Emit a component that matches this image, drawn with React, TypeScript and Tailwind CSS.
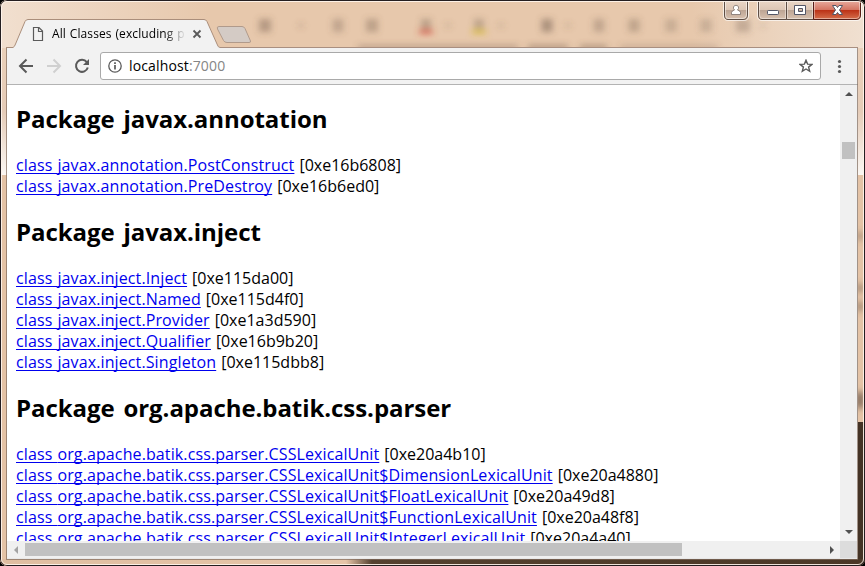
import React from "react";

type Entry = { name: string; addr: string };

const groups: { title: string; items: Entry[] }[] = [
  {
    title: "javax.annotation",
    items: [
      { name: "javax.annotation.PostConstruct", addr: "0xe16b6808" },
      { name: "javax.annotation.PreDestroy", addr: "0xe16b6ed0" },
    ],
  },
  {
    title: "javax.inject",
    items: [
      { name: "javax.inject.Inject", addr: "0xe115da00" },
      { name: "javax.inject.Named", addr: "0xe115d4f0" },
      { name: "javax.inject.Provider", addr: "0xe1a3d590" },
      { name: "javax.inject.Qualifier", addr: "0xe16b9b20" },
      { name: "javax.inject.Singleton", addr: "0xe115dbb8" },
    ],
  },
  {
    title: "org.apache.batik.css.parser",
    items: [
      { name: "org.apache.batik.css.parser.CSSLexicalUnit", addr: "0xe20a4b10" },
      { name: "org.apache.batik.css.parser.CSSLexicalUnit$DimensionLexicalUnit", addr: "0xe20a4880" },
      { name: "org.apache.batik.css.parser.CSSLexicalUnit$FloatLexicalUnit", addr: "0xe20a49d8" },
      { name: "org.apache.batik.css.parser.CSSLexicalUnit$FunctionLexicalUnit", addr: "0xe20a48f8" },
      { name: "org.apache.batik.css.parser.CSSLexicalUnit$IntegerLexicalUnit", addr: "0xe20a4a40" },
    ],
  },
];

// Blurred desktop content seen through the glass window frame: x, width, opacity.
const marks = [
  [265, 12, 0.4], [301, 5, 0.22], [338, 11, 0.3], [372, 12, 0.34], [426, 10, 0.36], [448, 6, 0.18],
  [479, 10, 0.32], [501, 6, 0.18], [547, 11, 0.48], [568, 6, 0.18], [599, 11, 0.3], [634, 11, 0.32],
  [671, 12, 0.24], [706, 12, 0.24], [743, 14, 0.3], [763, 5, 0.14],
];

function Glass() {
  return (
    <svg className="absolute inset-0" width="865" height="566">
      <defs>
        <linearGradient id="top" x1="0" x2="1">
          <stop offset="0" stopColor="#f1dfcf" />
          <stop offset=".24" stopColor="#e7c8ac" />
          <stop offset=".8" stopColor="#e7c8ac" />
          <stop offset="1" stopColor="#f0e0d1" />
        </linearGradient>
        <linearGradient id="side" x1="0" y1="0" x2="0" y2="1">
          <stop offset="0" stopColor="#ead0b9" />
          <stop offset=".5" stopColor="#e5ccb8" />
          <stop offset="1" stopColor="#fbf7f3" />
        </linearGradient>
        <linearGradient id="bottom" x1="0" x2="1">
          <stop offset="0" stopColor="#dfbea1" />
          <stop offset=".4" stopColor="#e6c5a8" />
          <stop offset=".43" stopColor="#54412f" />
          <stop offset="1" stopColor="#4b3827" />
        </linearGradient>
        <filter id="soft" x="-10%" y="-10%" width="120%" height="120%"><feGaussianBlur stdDeviation="3.2" /></filter>
      </defs>
      <rect width="865" height="566" fill="#e4c3a6" />
      <rect width="865" height="48" fill="url(#top)" />
      <rect y="48" width="8" height="127" fill="url(#side)" />
      <rect x="857" y="48" width="8" height="127" fill="url(#side)" />
      <rect x="857" y="422" width="8" height="144" fill="#443325" />
      <rect y="559" width="865" height="7" fill="url(#bottom)" />
      <g filter="url(#soft)" fill="#6b5647">
        {marks.map(([x, w, o]) => (
          <rect key={x} x={x - w / 2} y={w < 7 ? 23 : 19} width={w} height={w < 7 ? 5 : 13} opacity={o} />
        ))}
        <rect x="419" y="30" width="14" height="4" fill="#d94c3c" opacity=".75" />
        <rect x="472" y="30" width="14" height="4" fill="#dcc02c" opacity=".75" />
        <rect x="358" y="45" width="160" height="5" opacity=".35" />
        <rect x="528" y="45" width="40" height="5" opacity=".45" />
        <rect x="580" y="45" width="27" height="5" opacity=".45" />
        <rect x="620" y="45" width="98" height="5" opacity=".25" />
        <rect x="856" y="232" width="8" height="8" opacity=".4" />
        <rect x="856" y="284" width="8" height="8" opacity=".5" />
        <rect x="856" y="302" width="8" height="9" opacity=".5" />
        <rect x="856" y="392" width="8" height="16" opacity=".8" />
      </g>
    </svg>
  );
}

function WindowButtons() {
  return (
    <svg className="absolute right-0 top-0" width="160" height="24">
      <defs>
        <linearGradient id="btn" x1="0" y1="0" x2="0" y2="1">
          <stop offset="0" stopColor="#ead6c6" /><stop offset=".48" stopColor="#dcc6b5" />
          <stop offset=".5" stopColor="#bda594" /><stop offset="1" stopColor="#d9c2b0" />
        </linearGradient>
        <linearGradient id="close" x1="0" y1="0" x2="0" y2="1">
          <stop offset="0" stopColor="#e7aa9d" /><stop offset=".47" stopColor="#d47562" />
          <stop offset=".5" stopColor="#bb3116" /><stop offset="1" stopColor="#d6714e" />
        </linearGradient>
      </defs>
      <g transform="translate(-15 0)">
        <path d="M33.500 1 V16 Q33.500 20.500 38 20.500 H54 Q58.500 20.500 58.500 16 V1" fill="none" stroke="#fff" strokeOpacity=".65" />
        <path d="M34.500 1 V15 Q34.500 19.500 38 19.500 H53 Q57.500 19.500 57.500 15 V1Z" fill="url(#btn)" stroke="#5e4e45" />
        <path d="M35.500 2 V15 Q35.500 18.500 38 18.500 H53 Q56.500 18.500 56.500 15 V2" fill="none" stroke="#fff" strokeOpacity=".5" />
        <path d="M67.500 1 V16 Q67.500 20.500 72 20.500 H167 Q171.500 20.500 171.500 16 V1" fill="none" stroke="#fff" strokeOpacity=".65" />
        <path d="M68.500 1 V15 Q68.500 19.500 72 19.500 H96.500 V1Z" fill="url(#btn)" stroke="#5e4e45" />
        <path d="M96.500 1 V19.500 H123.500 V1Z" fill="url(#btn)" stroke="#5e4e45" />
        <path d="M123.500 1 V19.500 H166 Q170.500 19.500 170.500 15 V1Z" fill="url(#close)" stroke="#581d16" />
        <path d="M69.500 2 V15 Q69.500 18.500 72 18.500 H95.500 V2 M97.500 2 V18.500 H122.500 V2 M124.500 2 V18.500 H166 Q169.500 18.500 169.500 15 V2" fill="none" stroke="#fff" strokeOpacity=".42" />
        <path d="M41.500 14.500 V12.500 Q42 10.500 44.500 10 Q43 8.500 43.500 7 Q44 5.300 46 5.300 Q48 5.300 48.500 7 Q49 8.500 47.500 10 Q50 10.500 50.500 12.500 V14.500Z" fill="#fff" stroke="#7b706b" strokeWidth=".8" />
        <rect x="77.500" y="10.500" width="11" height="4" rx=".8" fill="#fff" stroke="#535666" />
        <path fillRule="evenodd" d="M104.500 5.500 H115.500 V14.500 H104.500Z M108.500 8.500 V11.500 H112.500 V8.500Z" fill="#fff" stroke="#535666" />
        <path d="M142.500 5.500 h3.500 l1.500 2 1.500 -2 h3.500 l-3 4.500 3 4.500 h-3.500 l-1.500 -2 -1.500 2 h-3.500 l3 -4.500Z" fill="#fff" stroke="#535666" />
      </g>
    </svg>
  );
}

function TabStrip() {
  return (
    <div className="relative h-[47px] shrink-0">
      <svg className="absolute left-0 top-0" width="260" height="48">
        <path d="M217.500 29 Q216.500 26.500 219 26.500 H242 Q244 26.500 245 28.500 L250.500 41 Q251 42.500 249 42.500 H227 Q224.500 42.500 223.500 40.500Z" fill="#d4cbc5" stroke="#b09a8b" />
        <path d="M6 48 V47.500 H13 Q14.500 47 15.500 44 L25 21.500 Q26 19.500 28 19.500 H204 Q206 19.500 207 21.500 L217 44 Q218 47 220 47.500 V48Z" fill="#f2f2f2" />
        <path d="M6 47.500 H13 Q14.500 47 15.500 44 L25 21.500 Q26 19.500 28 19.500 H204 Q206 19.500 207 21.500 L217 44 Q218 47.500 220 47.500" fill="none" stroke="#aa8e7b" />
        <path d="M33.500 27.500 H39 L42.500 31 V40.500 H33.500Z M38.500 27.500 V31.500 H42.500" fill="none" stroke="#5a5a5a" strokeWidth="1.200" />
        <path d="M193.500 30.500 l7 7 M200.500 30.500 l-7 7" stroke="#5a5a5a" strokeWidth="1.800" />
      </svg>
      <div className="absolute left-[220px] right-[7px] top-[47px] h-px bg-[#a98f80]" />
      <div className="absolute left-[52px] top-[25px] w-[134px] overflow-hidden whitespace-nowrap text-[12px] leading-[18px] tracking-[0.1px] text-black [mask-image:linear-gradient(to_right,#000_112px,transparent_134px)] [word-spacing:0.6px]">
        All Classes (excluding p
      </div>
      <WindowButtons />
    </div>
  );
}

function Toolbar() {
  return (
    <div className="mx-[7px] flex h-[38px] shrink-0 items-start border-b border-[#b3b3b3] bg-[#f2f2f2] pt-[5px]">
      <svg className="shrink-0" width="93" height="28" viewBox="7 52 93 28" fill="none">
        <path d="M33 66 H20 M26.500 59.500 L20 66 L26.500 72.500" stroke="#5a5a5a" strokeWidth="2" />
        <path d="M47 66 H60 M53.500 59.500 L60 66 L53.500 72.500" stroke="#d0d0d0" strokeWidth="2" />
        <path d="M86.800 62.200 A6 6 0 1 0 87.800 67.500" stroke="#5a5a5a" strokeWidth="2" />
        <path d="M89 59 V65 H83Z" fill="#5a5a5a" />
      </svg>
      <div className="flex h-[28px] w-[721px] items-center rounded-[3px] border border-[#a9a9a9] bg-white px-[7px]">
        <svg width="14" height="14" viewBox="0 0 14 14" fill="none" stroke="#5a5a5a">
          <circle cx="7" cy="7" r="6.200" strokeWidth="1.300" />
          <path d="M7 6 V10.500 M7 3.300 V5" strokeWidth="1.700" />
        </svg>
        <span className="ml-[7px] text-[14px] leading-[24px] tracking-[0.14px] text-black">
          localhost<span className="text-[#858585]">:7000</span>
        </span>
        <svg className="ml-auto" width="14" height="14" viewBox="0 0 14 14" fill="none" stroke="#5a5a5a" strokeWidth="1.400">
          <path d="M7 1.200 L8.600 5.100 L12.900 5.400 L9.600 8.100 L10.700 12.300 L7 10 L3.300 12.300 L4.400 8.100 L1.100 5.400 L5.400 5.100Z" />
        </svg>
      </div>
      <svg className="ml-[16px] mt-[7px]" width="5" height="15" fill="#5a5a5a">
        <circle cx="2.500" cy="2.500" r="1.600" /><circle cx="2.500" cy="7.500" r="1.600" /><circle cx="2.500" cy="12.500" r="1.600" />
      </svg>
    </div>
  );
}

function Page() {
  return (
    <div className="h-[456px] min-w-0 flex-1 overflow-hidden bg-white pl-[9px] text-[16px] leading-[21px] text-black">
      {groups.map((g, i) => (
        <section key={g.title} className={i === 0 ? "pt-[18px]" : "pt-[19px]"}>
          <h2 className="mb-[21px] whitespace-nowrap text-[24px] font-bold leading-[31px] tracking-[-0.06px] [word-spacing:2.7px]">
            Package {g.title}
          </h2>
          {g.items.map((it) => (
            <div key={it.name} className="h-[21px] whitespace-nowrap [word-spacing:0.8px]">
              <a className="tracking-[0.11px] text-[#0000ee] underline decoration-1 underline-offset-2 [text-decoration-skip-ink:none]">
                class {it.name}
              </a>{" "}
              [{it.addr}]
            </div>
          ))}
        </section>
      ))}
    </div>
  );
}

export default function App() {
  return (
    <div className="relative h-[566px] w-[865px] overflow-hidden bg-black font-['Open_Sans','Noto_Sans',sans-serif]">
      <div className="relative h-[566px] w-[865px] overflow-hidden rounded-[7px]">
        <Glass />
        <div className="relative flex h-full flex-col">
          <TabStrip />
          <Toolbar />
          <div className="mx-[7px] flex h-[456px] border-r border-[#eeeeee]">
            <Page />
            <div className="flex w-[17px] flex-col items-center bg-[#f0f0f0]">
              <svg className="mt-[7px]" width="8" height="4"><path d="M0 4 L4 0 L8 4Z" fill="#505050" /></svg>
              <div className="mt-[46px] h-[17px] w-[13px] bg-[#c1c1c1]" />
              <svg className="mb-[7px] mt-auto" width="8" height="4"><path d="M0 0 H8 L4 4Z" fill="#505050" /></svg>
            </div>
          </div>
          <div className="mx-[7px] flex h-[18px] items-center border-b border-[#e8e8e8] bg-[#f0f0f0]">
            <svg className="ml-[7px]" width="4" height="8"><path d="M4 0 V8 L0 4Z" fill="#a3a3a3" /></svg>
            <div className="ml-[7px] h-[13px] w-[657px] bg-[#c1c1c1]" />
            <svg className="ml-auto mr-[6px]" width="4" height="8"><path d="M0 0 V8 L4 4Z" fill="#505050" /></svg>
            <div className="h-[17px] w-[17px] bg-[#dcdcdc]" />
            <div className="w-px" />
          </div>
        </div>
        <div className="pointer-events-none absolute inset-0 rounded-[7px] border border-[#241e20]" />
        <div className="pointer-events-none absolute inset-px rounded-[6px] border border-[#fff5ec]/90" />
        <div className="pointer-events-none absolute bottom-[6px] left-[6px] right-[7px] top-[48px] border-x border-b border-[#806b5c]/70" />
      </div>
    </div>
  );
}
